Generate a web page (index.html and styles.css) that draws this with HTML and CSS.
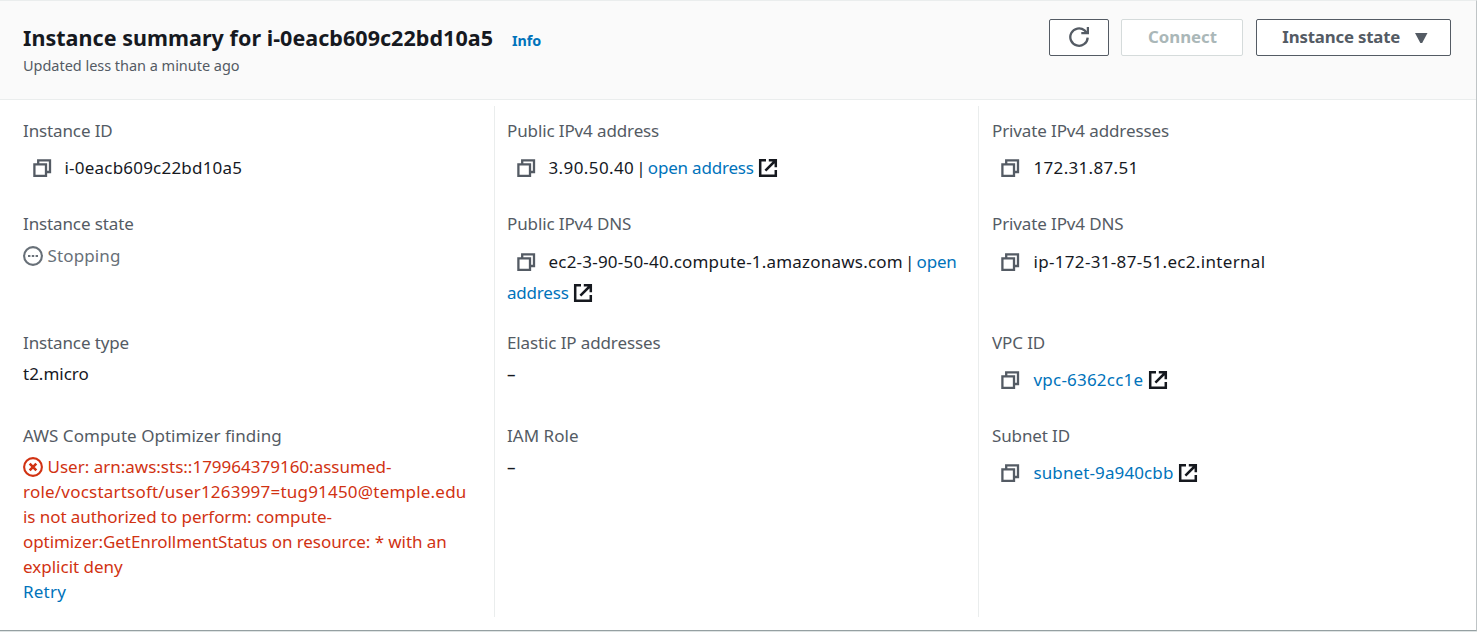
FILE: index.html
```
<!DOCTYPE html>
<html lang="en">
<head>
<meta charset="utf-8">
<title>Instance summary</title>
<link rel="stylesheet" href="styles.css">
</head>
<body>
<svg class="sprite" aria-hidden="true">
  <symbol id="copy" viewBox="0 0 20 20"><path d="M2.4 6.4H14v11.5H2.4zM6.2 6V2.4H18V14h-3.6"/></symbol>
  <symbol id="external" viewBox="0 0 20 20"><path d="M8 2.2H2.2v15.6h15.6V12M10.8 2.2h7v7M17.5 2.5 7.4 12.6"/></symbol>
</svg>
<main class="panel">
  <header class="head">
    <div class="heading">
      <div class="title-row"><h1>Instance summary for i-0eacb609c22bd10a5</h1><a class="info">Info</a></div>
      <p class="updated">Updated less than a minute ago</p>
    </div>
    <div class="actions">
      <button class="btn refresh" aria-label="Refresh"><svg class="icon" viewBox="0 0 20 20"><path d="M18.7 10.6A8.7 8.7 0 1 1 15.6 3.4L18 6"/><path class="arrow" d="M18.9 0v6.2h-6.6"/></svg></button>
      <button class="btn connect" disabled>Connect</button>
      <button class="btn state">Instance state<svg class="caret" viewBox="0 0 12 10"><path d="M0 0h12L7 9.4Q6 10.4 5 9.4z"/></svg></button>
    </div>
  </header>
  <div class="columns">
    <section class="column">
      <div class="field"><h2>Instance ID</h2><div class="copyable"><span class="copy"><svg class="icon"><use href="#copy"/></svg></span><span class="wide">i-0eacb609c22bd10a5</span></div></div>
      <div class="field"><h2>Instance state</h2><div class="status pending"><svg class="status-icon" viewBox="0 0 20 20"><circle cx="10" cy="10" r="8.9"/><path d="M5 10h2.4M8.8 10h2.4M12.6 10H15"/></svg>Stopping</div></div>
      <div class="field"><h2>Instance type</h2><div>t2.micro</div></div>
      <div class="field"><h2 class="even">AWS Compute Optimizer finding</h2>
        <div class="status error"><svg class="status-icon" viewBox="0 0 20 20"><circle cx="10" cy="10" r="8.9"/><path class="cross" d="m6.7 6.7 6.6 6.6m0-6.6-6.6 6.6"/></svg>User: arn:aws:sts::179964379160:assumed-<br><span class="wide">role/vocstartsoft/user1263997=tug91450@temple.edu</span><br><span class="snug">is not authorized to perform: compute-<br>optimizer:GetEnrollmentStatus on resource: * with an</span><br>explicit deny</div>
        <a class="wide">Retry</a></div>
    </section>
    <section class="column">
      <div class="field"><h2>Public IPv4 address</h2><div class="copyable"><span class="copy"><svg class="icon"><use href="#copy"/></svg></span><span class="address">3.90.50.40</span><span class="pipe"> | </span><a class="tight">open address</a><svg class="external"><use href="#external"/></svg></div></div>
      <div class="field"><h2>Public IPv4 DNS</h2><div class="copyable low"><span class="copy"><svg class="icon"><use href="#copy"/></svg></span><span class="wide">ec2-3-90-50-40.compute-1.amazonaws.com</span><span class="pipe"> | </span><a class="tight">open<br>address</a><svg class="external"><use href="#external"/></svg></div></div>
      <div class="field"><h2>Elastic IP addresses</h2><div class="empty">–</div></div>
      <div class="field"><h2 class="even">IAM Role</h2><div class="empty">–</div></div>
    </section>
    <section class="column">
      <div class="field"><h2>Private IPv4 addresses</h2><div class="copyable"><span class="copy"><svg class="icon"><use href="#copy"/></svg></span><span class="wider">172.31.87.51</span></div></div>
      <div class="field"><h2>Private IPv4 DNS</h2><div class="copyable low"><span class="copy"><svg class="icon"><use href="#copy"/></svg></span><span class="wider">ip-172-31-87-51.ec2.internal</span></div></div>
      <div class="field"><h2>VPC ID</h2><div class="copyable"><span class="copy"><svg class="icon"><use href="#copy"/></svg></span><a class="wide">vpc-6362cc1e</a><svg class="external"><use href="#external"/></svg></div></div>
      <div class="field"><h2>Subnet ID</h2><div class="copyable"><span class="copy"><svg class="icon"><use href="#copy"/></svg></span><a class="subnet">subnet-9a940cbb</a><svg class="external"><use href="#external"/></svg></div></div>
    </section>
  </div>
</main>
</body>
</html>
```
FILE: styles.css
```
* { box-sizing: border-box; }
body {
  margin: 0;
  font: 17px/25px "Noto Sans", sans-serif;
  color: #16191f;
  background: #dfe4e4;
  overflow: hidden;
}
.sprite { display: none; }
svg { fill: none; stroke: currentColor; stroke-width: 2.3; }
.panel {
  height: 631px;
  background: #fff;
  border-top: 1px solid #eaeded;
  border-right: 1px solid #bfc4c6;
  border-bottom: 1px solid #95a0a2;
}
.head {
  display: flex;
  justify-content: space-between;
  height: 99px;
  padding: 18px 25px 0 23px;
  background: #fafafa;
  border-bottom: 1px solid #eaeded;
}
.title-row { display: flex; align-items: baseline; gap: 19px; height: 34px; }
h1 { margin: 0; font-size: 21.5px; line-height: 38px; font-weight: 700; letter-spacing: .04px; }
.info { font-size: 14.3px; font-weight: 700; }
.updated { margin: 0; font-size: 14.5px; line-height: 25px; letter-spacing: -.03px; color: #545b64; }
.actions { display: flex; align-items: flex-start; }
.btn {
  display: flex;
  align-items: center;
  justify-content: center;
  height: 37px;
  padding: 0 0 2px;
  font: 700 16.8px/25px "Noto Sans", sans-serif;
  color: #545b64;
  background: #fff;
  border: 1px solid #545b64;
  border-radius: 2px;
}
.refresh { width: 60px; margin-right: 12px; }
.connect { width: 122px; margin-right: 13px; padding-left: 1px; color: #aab7b8; border-color: #d5dbdb; }
.state { width: 195px; padding-left: 3px; letter-spacing: -.17px; }
.icon { display: block; width: 20px; height: 20px; }
.caret { width: 12.5px; height: 10.4px; margin: 3px 0 0 15px; fill: currentColor; stroke: none; }
.columns {
  display: grid;
  grid-template-columns: 495px 484px 1fr;
  height: 511px;
  margin-top: 6px;
}
.column {
  display: grid;
  grid-template-rows: 93px 119px 93px 1fr;
  padding: 12px 12px 0;
  border-right: 1px solid #eaeded;
}
.column:first-child { padding-left: 23px; }
.column:last-child { padding-left: 13px; border-right: 0; }
.field { white-space: nowrap; }
.field h2 { margin: 0 0 6px; font: inherit; letter-spacing: -.12px; color: #545b64; }
.field .even { letter-spacing: .03px; }
.copyable { padding-top: 1px; }
.copy {
  display: inline-flex;
  align-items: center;
  width: 41.5px;
  height: 36px;
  padding-left: 9px;
  vertical-align: -4px;
  color: #545b64;
}
.low { padding-top: 2px; }
.column:last-child .copy { padding-left: 8px; }
.external { width: 20px; height: 20px; margin-left: 4.5px; vertical-align: -4px; stroke-width: 2.5; }
.status-icon { width: 20px; height: 20px; margin-right: 4.5px; vertical-align: -4px; stroke-width: 2.1; }
.cross { stroke-width: 2.6; }
.pending { padding-top: 1px; color: #687078; letter-spacing: .13px; }
.error { color: #d13212; }
.empty { font-weight: 500; }
a { color: #0073bb; }
.tight { letter-spacing: -.2px; }
.snug { letter-spacing: -.07px; }
.address { letter-spacing: .4px; }
.pipe { white-space: pre; word-spacing: -2.3px; }
.subnet { letter-spacing: .11px; }
.wide { letter-spacing: .21px; }
.wider { letter-spacing: .32px; }
```
